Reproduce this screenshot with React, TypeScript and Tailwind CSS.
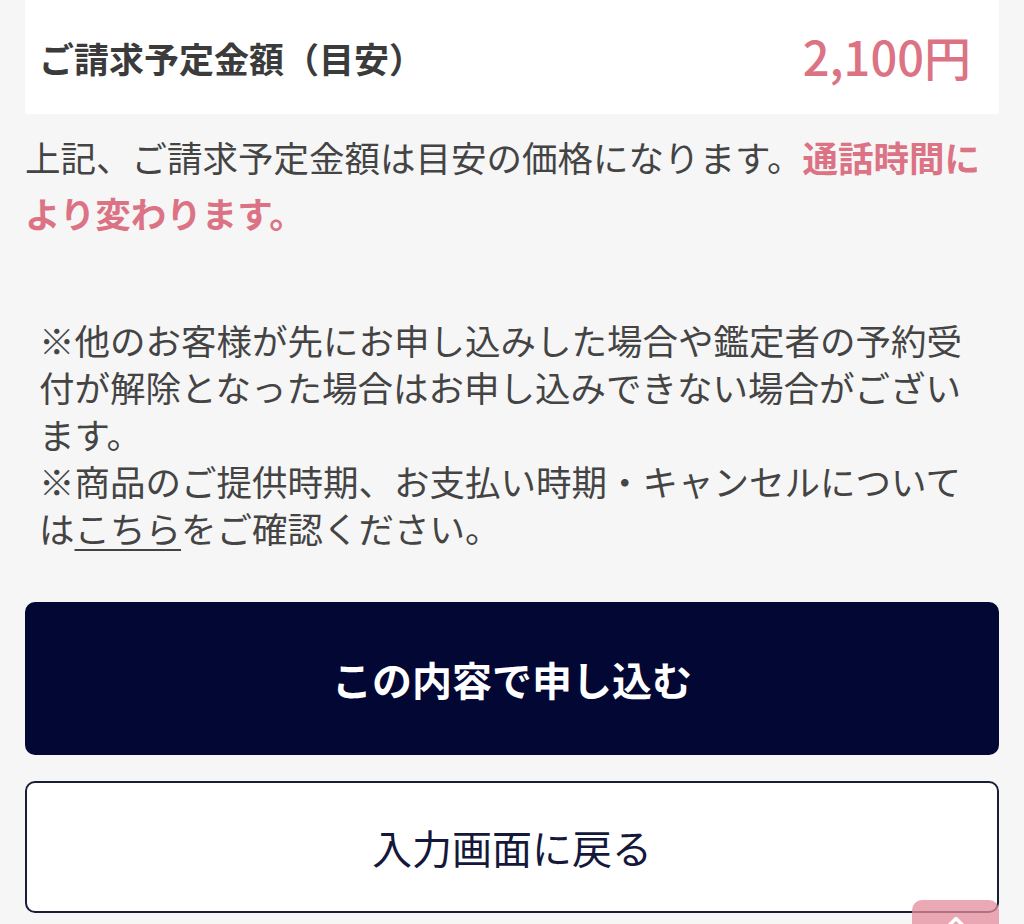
import { ChevronUp } from 'lucide-react'

const FONT = 'font-["Noto_Sans_CJK_JP","Noto_Sans",sans-serif]'

export default function App() {
  return (
    <div className={`relative h-[924px] overflow-hidden bg-[#f6f6f6] ${FONT}`}>
      <div className="mx-[25px]">
        {/* estimate summary */}
        <div className="flex h-[114px] items-center justify-between bg-white pl-[14px] pr-[28px]">
          <p className="text-[35px] font-bold leading-none text-[#3b3b3b]">ご請求予定金額（目安）</p>
          <p className="pb-[4px] text-[47px] font-medium leading-none text-[#dc7384]">2,100円</p>
        </div>

        <p className="mt-[15px] text-[35.5px] leading-[56px] text-[#444]">
          上記、ご請求予定金額は目安の価格になります。
          <span className="font-bold text-[#dc7384]">通話時間により変わります。</span>
        </p>

        <div className="mt-[75px] w-[940px] pl-[14px] text-[35.5px] leading-[47px] text-[#444]">
          <p>※他のお客様が先にお申し込みした場合や鑑定者の予約受付が解除となった場合はお申し込みできない場合がございます。</p>
          <p>
            ※商品のご提供時期、お支払い時期・キャンセルについては
            <span className="underline decoration-[2px] underline-offset-[6px]">こちら</span>
            をご確認ください。
          </p>
        </div>

        <div className="mt-[51px] flex flex-col gap-[26px]">
          <button className="flex h-[153px] items-center justify-center rounded-[10px] bg-[#020833] text-[40px] font-bold text-white">
            この内容で申し込む
          </button>
          <button className="flex h-[132px] items-center justify-center rounded-[10px] border-2 border-[#1a1d3a] bg-white text-[40px] text-[#14183a]">
            入力画面に戻る
          </button>
        </div>
      </div>

      {/* scroll to top */}
      <div className="absolute left-[912px] top-[900px] flex h-[80px] w-[87px] justify-center rounded-[10px] bg-[#e38c9b]/75 pt-[8px]">
        <ChevronUp className="h-[28px] w-[28px] text-white" strokeWidth={3} />
      </div>
    </div>
  )
}
